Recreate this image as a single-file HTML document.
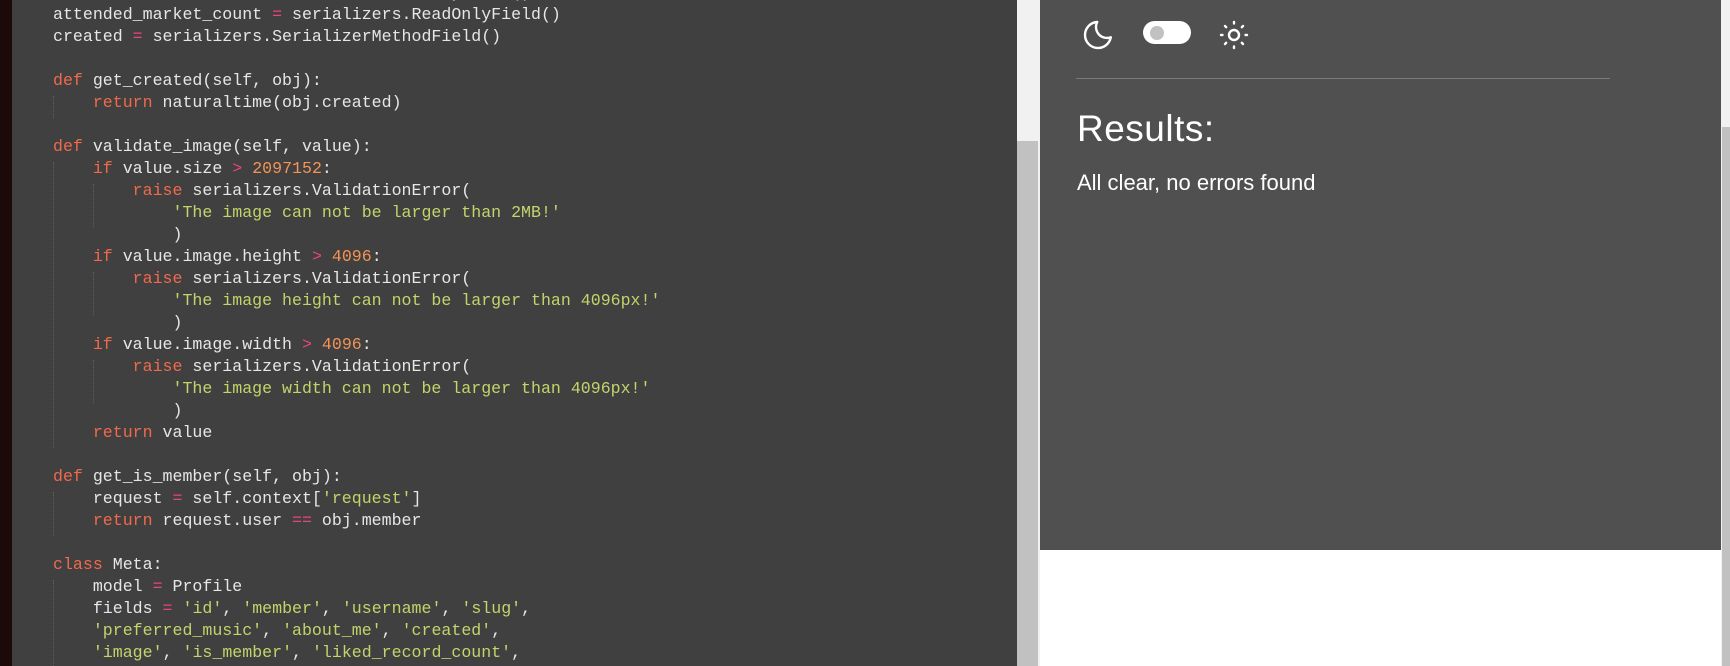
<!DOCTYPE html>
<html><head><meta charset="utf-8"><style>
*{margin:0;padding:0}
body{width:1730px;height:666px;position:relative;overflow:hidden;background:#fff;font-family:"Liberation Sans",sans-serif}
#ed{position:absolute;left:0;top:0;width:1017px;height:666px;background:#404040;overflow:hidden}
#strip{position:absolute;left:0;top:0;width:12px;height:666px;background:#1c0a0a}
pre{position:absolute;left:53px;top:-18px;font-family:"Liberation Mono",monospace;font-size:16.6px;line-height:22px;color:#e6e6e6;white-space:pre}
.k{color:#f0694c}.s{color:#c2d46a}.n{color:#f59355}.o{color:#e8457a}
#gap{position:absolute;left:1017px;top:0;width:23px;height:666px;background:#f1f1f1}
#thumb{position:absolute;left:1017px;top:141px;width:21px;height:525px;background:#c1c1c1}
#panel{position:absolute;left:1040px;top:0;width:681px;height:550px;background:#505050}
#rs{position:absolute;left:1721px;top:0;width:9px;height:666px;background:#f1f1f1}
#rt{position:absolute;left:1722px;top:127px;width:8px;height:539px;background:#c1c1c1}
#hr{position:absolute;left:1076px;top:78px;width:534px;height:1px;background:#7a7a7a}
#res{position:absolute;left:1077px;top:108px;font-size:37px;color:#fff;letter-spacing:.5px;font-family:"Liberation Sans",sans-serif;font-weight:300}
#ok{position:absolute;left:1077px;top:170px;font-size:22px;color:#fff}
#tog{position:absolute;left:1143px;top:21px;width:48px;height:23px;border-radius:12px;background:#fff}
#knob{position:absolute;left:1150px;top:26px;width:14px;height:14px;border-radius:50%;background:#c1c1c1}
.g{position:absolute;width:0;border-left:1px dotted #6a5a50}
</style></head><body>
<div id="ed"><div id="strip"></div>
<div class="g" style="left:53px;top:96px;height:22px"></div>
<div class="g" style="left:53px;top:162px;height:286px"></div>
<div class="g" style="left:93px;top:184px;height:44px"></div>
<div class="g" style="left:93px;top:272px;height:44px"></div>
<div class="g" style="left:93px;top:360px;height:44px"></div>
<div class="g" style="left:53px;top:492px;height:44px"></div>
<div class="g" style="left:53px;top:580px;height:86px"></div>
<pre>liked_record_count <span class="o">=</span> serializers.ReadOnlyField()
attended_market_count <span class="o">=</span> serializers.ReadOnlyField()
created <span class="o">=</span> serializers.SerializerMethodField()

<span class="k">def</span> get_created(self, obj):
    <span class="k">return</span> naturaltime(obj.created)

<span class="k">def</span> validate_image(self, value):
    <span class="k">if</span> value.size <span class="o">&gt;</span> <span class="n">2097152</span>:
        <span class="k">raise</span> serializers.ValidationError(
            <span class="s">'The image can not be larger than 2MB!'</span>
            )
    <span class="k">if</span> value.image.height <span class="o">&gt;</span> <span class="n">4096</span>:
        <span class="k">raise</span> serializers.ValidationError(
            <span class="s">'The image height can not be larger than 4096px!'</span>
            )
    <span class="k">if</span> value.image.width <span class="o">&gt;</span> <span class="n">4096</span>:
        <span class="k">raise</span> serializers.ValidationError(
            <span class="s">'The image width can not be larger than 4096px!'</span>
            )
    <span class="k">return</span> value

<span class="k">def</span> get_is_member(self, obj):
    request <span class="o">=</span> self.context[<span class="s">'request'</span>]
    <span class="k">return</span> request.user <span class="o">==</span> obj.member

<span class="k">class</span> Meta:
    model <span class="o">=</span> Profile
    fields <span class="o">=</span> <span class="s">'id'</span>, <span class="s">'member'</span>, <span class="s">'username'</span>, <span class="s">'slug'</span>,
    <span class="s">'preferred_music'</span>, <span class="s">'about_me'</span>, <span class="s">'created'</span>,
    <span class="s">'image'</span>, <span class="s">'is_member'</span>, <span class="s">'liked_record_count'</span>,</pre>
</div>
<div id="gap"></div><div id="thumb"></div>
<div id="panel"></div>
<div id="rs"></div><div id="rt"></div>
<svg style="position:absolute;left:1080px;top:14px" width="40" height="40" viewBox="0 0 40 40"><path d="M17.2 8 A13 13 0 1 0 30.8 23.3 A11 11 0 0 1 17.2 8 Z" fill="none" stroke="#fff" stroke-width="2.4" stroke-linejoin="round"/></svg>
<div id="tog"></div><div id="knob"></div>
<svg style="position:absolute;left:1218px;top:19px" width="32" height="32" viewBox="0 0 32 32" stroke="#fff" stroke-width="2.4" stroke-linecap="round" fill="none"><circle cx="16" cy="16" r="5"/><path d="M16 3v1.5M16 27.5v1.5M3 16h1.5M27.5 16h1.5M7 7l1.2 1.2M23.8 23.8l1.2 1.2M7 25l1.2-1.2M23.8 8.2l1.2-1.2"/></svg>
<div id="hr"></div>
<div id="res">Results:</div>
<div id="ok">All clear, no errors found</div>
</body></html>
